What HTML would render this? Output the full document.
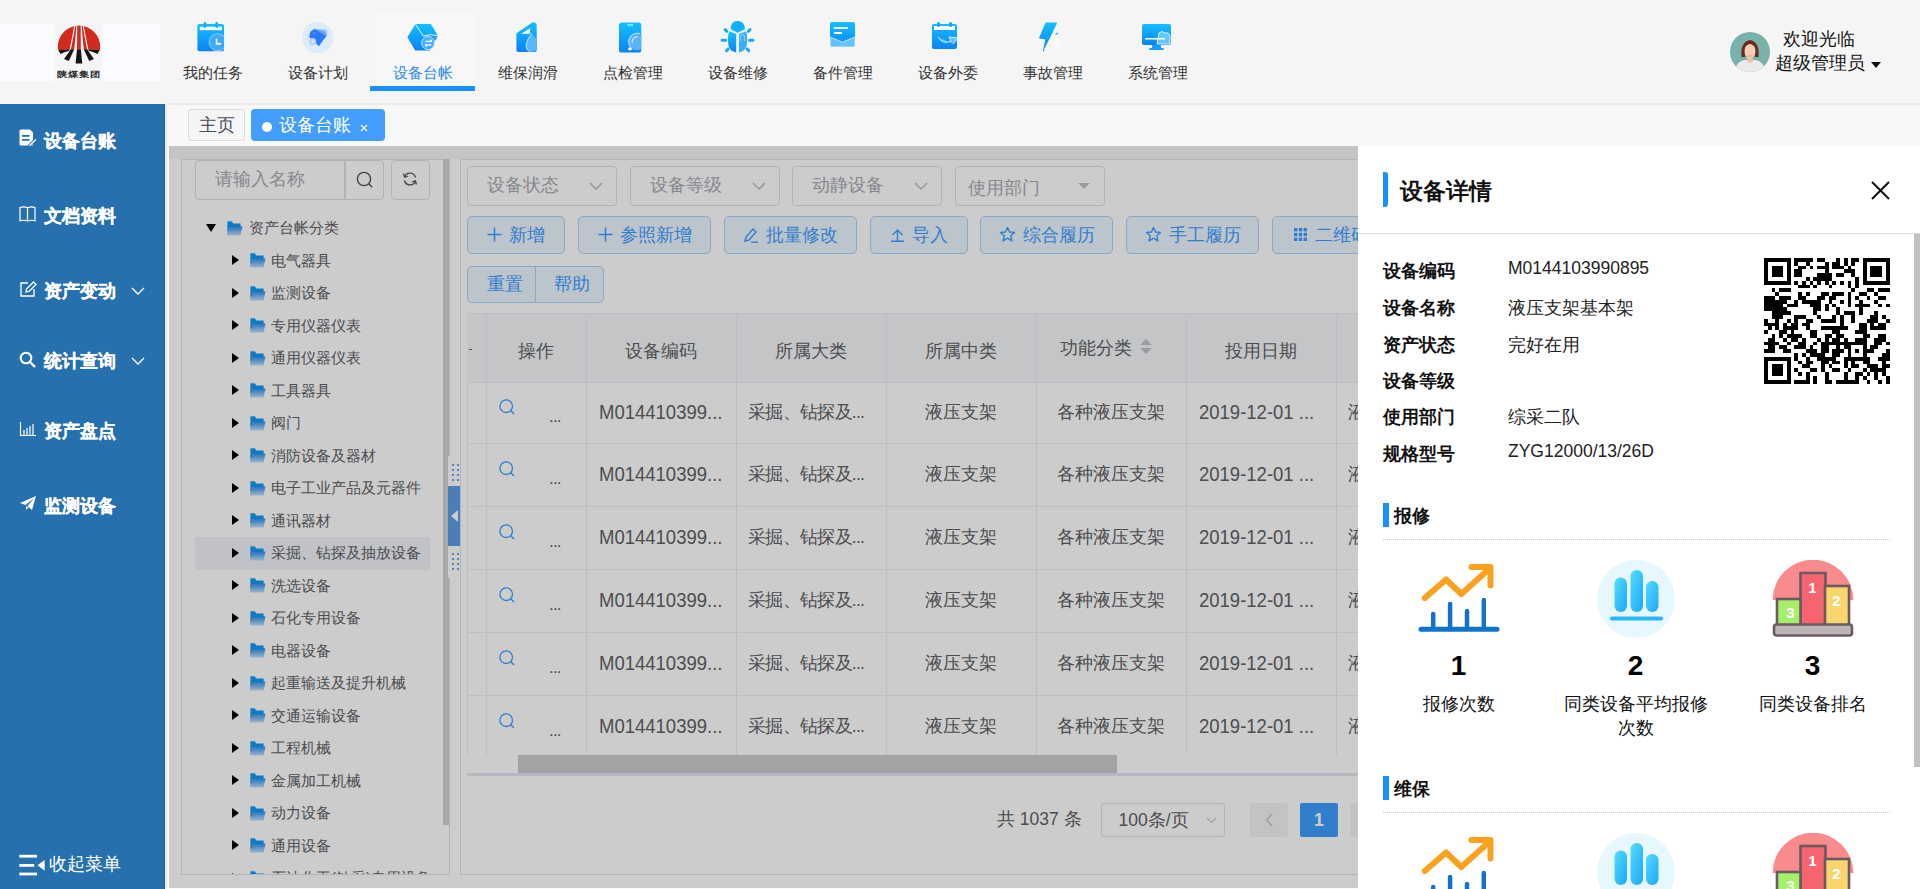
<!DOCTYPE html><html><head><meta charset="utf-8"><title>设备台账</title><style>
*{margin:0;padding:0;box-sizing:border-box}
html,body{width:1920px;height:889px;overflow:hidden;background:#f5f5f5;font-family:"Liberation Sans", sans-serif;position:relative}
.a{position:absolute}
.t{position:absolute;white-space:nowrap}
</style></head><body>
<div class="a" style="left:0;top:0;width:1920px;height:104px;background:#f5f5f5"></div>
<div class="a" style="left:0;top:24px;width:160px;height:57px;background:#fafbfe"></div>
<div class="a" style="left:55px;top:24px;width:47px;height:57px;background:#f5f5f5"></div>
<svg class="a" style="left:56px;top:24px" width="46" height="54" viewBox="0 0 46 54">
<defs><clipPath id="lc"><circle cx="23" cy="22.8" r="21.2"/></clipPath></defs>
<g clip-path="url(#lc)"><path d="M0 0 H46 V26.5 L32 25.2 L14 25.2 L0 26.5 Z" fill="#d12a1e"/></g>
<path d="M18.6 0 L19.6 0 Q17.2 14 14.9 25.6 L13.6 25.6 Q16 14 18.6 0 Z" fill="#f5f5f5"/>
<path d="M20.4 0 L21.3 0 L21 25.6 L18.2 25.6 Q19.6 14 20.4 0 Z" fill="#f5f5f5"/>
<path d="M24.7 0 L25.6 0 Q26.4 14 27.8 25.6 L24.8 25.6 Z" fill="#f5f5f5"/>
<path d="M26.4 0 L27.4 0 Q30 14 32.4 25.6 L31.1 25.6 Q28.8 14 26.4 0 Z" fill="#f5f5f5"/>
<path d="M2.3 26.2 L13.6 25.2 L13.4 26.8 Q8 28.2 4.6 29.9 Z" fill="#151515"/>
<path d="M43.7 26.2 L32.4 25.2 L32.6 26.8 Q38 28.2 41.4 29.9 Z" fill="#151515"/>
<path d="M14.9 25.2 L18.2 25.2 L12.8 37.1 L8 35 Z" fill="#151515"/>
<path d="M21 25.2 L24.8 25.2 L26.3 39.4 L19.6 39.4 Z" fill="#151515"/>
<path d="M27.8 25.2 L31.1 25.2 L38 35 L33.2 37.1 Z" fill="#151515"/>
</svg>
<div class="t" style="left:57px;top:45px;font-size:10.8px;line-height:12px;font-weight:bold;color:#2a2a2a;transform:scale(1.0,0.78);transform-origin:left top;letter-spacing:0px;top:69px">陕煤集团</div>
<div class="a" style="left:370px;top:13px;width:105px;height:78px;background:#f7f7f7"></div>
<div class="a" style="left:370px;top:86px;width:105px;height:5px;background:#1890ff"></div>
<svg class="a" style="left:197px;top:22px" width="30" height="31" viewBox="0 0 30 31"><defs><linearGradient id="bg0" x1="0" y1="0" x2="0" y2="1"><stop offset="0" stop-color="#14c0ff"/><stop offset="1" stop-color="#0a82f5"/></linearGradient></defs><defs><clipPath id="cc0"><rect x="0.4" y="2" width="26.6" height="27.3" rx="2"/></clipPath></defs><rect x="0.4" y="2" width="26.6" height="27.3" rx="2" fill="url(#bg0)"/><rect x="2.8" y="4.7" width="22.2" height="3.5" fill="#fff"/><rect x="6.6" y="0" width="2.6" height="6" rx="1.3" fill="#12b0ff"/><rect x="18.4" y="0" width="2.6" height="6" rx="1.3" fill="#12b0ff"/><g clip-path="url(#cc0)"><circle cx="20.7" cy="20.3" r="8.6" fill="#3cabff"/></g><circle cx="20.7" cy="20.3" r="8.6" fill="none" stroke="#fff" stroke-width="0.6" opacity="0.8"/><path d="M19.6 16.8 V21.9 H24" fill="none" stroke="#fff" stroke-width="1.6"/></svg>
<div class="t" style="left:160px;top:62px;width:105px;text-align:center;font-size:15px;line-height:22px;color:#333">我的任务</div>
<svg class="a" style="left:302px;top:22px" width="32" height="32" viewBox="0 0 32 32"><defs><linearGradient id="bg1" x1="0" y1="0" x2="0" y2="1"><stop offset="0" stop-color="#14c0ff"/><stop offset="1" stop-color="#0a82f5"/></linearGradient></defs><circle cx="15.7" cy="15.5" r="15.6" fill="#dcebfd"/><path d="M12.2 6.7 L25.1 7.5 L25.1 14.1 L20 19 Z" fill="#a9c8f8"/><path d="M12.2 6.9 L23 9 L24.6 14 L20 18 Z" fill="#6f9ff5"/><path d="M8.3 9.8 L12.2 7.1 L24.3 14.1 L20.8 18.8 L16.9 24.25 L7.1 14.9 Z" fill="#2a7af5"/><circle cx="10.7" cy="19.6" r="3.6" fill="#b7d1fb"/><circle cx="10.7" cy="19.6" r="1.3" fill="#dcebfd"/><circle cx="12" cy="11.2" r="0.7" fill="#9cc0fa"/></svg>
<div class="t" style="left:265px;top:62px;width:105px;text-align:center;font-size:15px;line-height:22px;color:#333">设备计划</div>
<svg class="a" style="left:407px;top:22px" width="32" height="30" viewBox="0 0 32 30"><defs><linearGradient id="bg2" x1="0" y1="0" x2="0" y2="1"><stop offset="0" stop-color="#14c0ff"/><stop offset="1" stop-color="#0a82f5"/></linearGradient></defs><path d="M0.4 15.3 L8.2 2.4 Q8.8 2 9.8 2 L23.9 2 L30.9 13.7 L22.7 28.5 L8.2 28.5 Z" fill="url(#bg2)"/><path d="M8.6 2.4 L16.4 14.1 Q23 11.5 30.9 13.7" fill="none" stroke="#fff" stroke-width="0.9"/><circle cx="21.1" cy="21.1" r="6.6" fill="#47b2ff" stroke="#fff" stroke-width="0.7" opacity="0.95"/><path d="M18.6 19.4 H25 M23.3 17.7 L25 19.4 M24.4 22.8 H18 M19.7 24.5 L18 22.8" fill="none" stroke="#fff" stroke-width="1.2"/></svg>
<div class="t" style="left:370px;top:62px;width:105px;text-align:center;font-size:15px;line-height:22px;color:#2f8bf0">设备台帐</div>
<svg class="a" style="left:515px;top:21px" width="23" height="33" viewBox="0 0 23 33"><defs><linearGradient id="bg3" x1="0" y1="0" x2="0" y2="1"><stop offset="0" stop-color="#14c0ff"/><stop offset="1" stop-color="#0a82f5"/></linearGradient></defs><path d="M1.4 13.5 Q1.4 12 2.8 11.2 L17.3 1.6 Q18.6 0.9 20 1.8 L21 2.6 Q21.7 3.2 21.7 4.6 V29.2 Q21.7 31 20 31 H3.2 Q1.4 31 1.4 29.2 Z" fill="url(#bg3)"/><path d="M6.1 12.75 L15.1 7.3 L15.1 12.75 Z" fill="#fff"/><path d="M17 12.4 Q11 19 11 25 A6 6 0 0 0 21.7 28.6 V19 Q19.5 15 17 12.4 Z" fill="#58b8ff"/><path d="M17 12.4 Q11 19 11 25 A6 6 0 0 0 15 30.6" fill="none" stroke="#fff" stroke-width="0.7"/></svg>
<div class="t" style="left:475px;top:62px;width:105px;text-align:center;font-size:15px;line-height:22px;color:#333">维保润滑</div>
<svg class="a" style="left:618px;top:22px" width="25" height="32" viewBox="0 0 25 32"><defs><linearGradient id="bg4" x1="0" y1="0" x2="0" y2="1"><stop offset="0" stop-color="#14c0ff"/><stop offset="1" stop-color="#0a82f5"/></linearGradient></defs><defs><clipPath id="cc4"><rect x="1" y="0.4" width="22.25" height="30.1" rx="2.6"/></clipPath></defs><rect x="1" y="0.4" width="22.25" height="30.1" rx="2.6" fill="url(#bg4)"/><rect x="9.2" y="2.4" width="5.8" height="1.1" fill="#fff" opacity="0.85"/><g clip-path="url(#cc4)"><circle cx="18.6" cy="19.6" r="8.6" fill="#58b6ff"/></g><path d="M12.6 25 A8.6 8.6 0 0 1 22 11.6" fill="none" stroke="#fff" stroke-width="0.7" opacity="0.9"/><path d="M14.2 20.5 A5 5 0 0 1 19.5 14.8" fill="none" stroke="#fff" stroke-width="1"/><ellipse cx="12" cy="26.8" rx="2" ry="1.6" fill="#fff"/></svg>
<div class="t" style="left:580px;top:62px;width:105px;text-align:center;font-size:15px;line-height:22px;color:#333">点检管理</div>
<svg class="a" style="left:720px;top:20px" width="35" height="34" viewBox="0 0 35 34"><defs><linearGradient id="bg5" x1="0" y1="0" x2="0" y2="1"><stop offset="0" stop-color="#14c0ff"/><stop offset="1" stop-color="#0a82f5"/></linearGradient></defs><path d="M10.7 9.2 Q10.7 0.9 17.7 0.9 Q24.8 0.9 24.8 9.2 L17.7 12.8 Z" fill="#0cb2ff"/><path d="M16.2 14 L16.2 32.5 Q8 31.5 8 21 Q8 13.5 9.4 11.3 Z" fill="url(#bg5)"/><path d="M19 14 L26 11.3 Q27.2 13.5 27.2 21 Q27.2 31.5 19 32.5 Z" fill="#3aaeff"/><path d="M20.5 21 V16.5 A2 2 0 0 1 24.5 16.5 V21" fill="none" stroke="#fff" stroke-width="0.6" opacity="0.7"/><path d="M5.2 9.6 L6.8 11.2 M30 9.6 L28.4 11.2 M2.2 20.3 H5.6 M29.6 20.3 H33 M6.5 30.8 L8 29 M28.7 30.8 L27.2 29" stroke="#12aaff" stroke-width="3" stroke-linecap="round"/></svg>
<div class="t" style="left:685px;top:62px;width:105px;text-align:center;font-size:15px;line-height:22px;color:#333">设备维修</div>
<svg class="a" style="left:829px;top:21px" width="27" height="28" viewBox="0 0 27 28"><defs><linearGradient id="bg6" x1="0" y1="0" x2="0" y2="1"><stop offset="0" stop-color="#14c0ff"/><stop offset="1" stop-color="#0a82f5"/></linearGradient></defs><rect x="1" y="1" width="25" height="25" rx="2" fill="url(#bg6)"/><rect x="5" y="6" width="14" height="2" fill="#fff"/><rect x="5" y="11" width="8" height="2" fill="#fff"/><path d="M1 16 L13.5 21 L26 16 L26 24 Q26 26 24 26 L3 26 Q1 26 1 24 Z" fill="#62c3ff" stroke="#fff" stroke-width="0.6"/></svg>
<div class="t" style="left:790px;top:62px;width:105px;text-align:center;font-size:15px;line-height:22px;color:#333">备件管理</div>
<svg class="a" style="left:931px;top:21px" width="28" height="30" viewBox="0 0 28 30"><defs><linearGradient id="bg7" x1="0" y1="0" x2="0" y2="1"><stop offset="0" stop-color="#14c0ff"/><stop offset="1" stop-color="#0a82f5"/></linearGradient></defs><rect x="1" y="3" width="25" height="25" rx="2" fill="url(#bg7)"/><rect x="3" y="5" width="21" height="4" fill="#fff"/><rect x="6" y="1" width="3" height="5" rx="1.5" fill="#0fa8ff"/><rect x="18" y="1" width="3" height="5" rx="1.5" fill="#0fa8ff"/><path d="M7 16 Q12 24 20 20 L18 16 L27 17 L22 23" fill="#5bbfff" stroke="#fff" stroke-width="0.8"/></svg>
<div class="t" style="left:895px;top:62px;width:105px;text-align:center;font-size:15px;line-height:22px;color:#333">设备外委</div>
<svg class="a" style="left:1038px;top:22px" width="27" height="32" viewBox="0 0 27 32"><defs><linearGradient id="bg8" x1="0" y1="0" x2="0" y2="1"><stop offset="0" stop-color="#14c0ff"/><stop offset="1" stop-color="#0a82f5"/></linearGradient></defs><path d="M7.4 0.9 Q7.7 0.4 8.3 0.4 L18.3 0.6 Q19.2 0.7 18.9 1.5 L5.4 29.4 Q5 30 4.9 29.2 L7.3 17.4 L1.6 16.6 Q0.8 16.5 1.1 15.8 Z" fill="url(#bg8)"/><path d="M11 27 L18 13 L27 26 Z" fill="#fff" opacity="0.45"/><path d="M6.5 27 L14.5 12.5 Q16 10.5 17 12.5 L17.5 14" fill="none" stroke="#fff" stroke-width="0.7" opacity="0.9"/><path d="M17.5 12.5 L20 11" stroke="#12a0ff" stroke-width="1.4"/></svg>
<div class="t" style="left:1000px;top:62px;width:105px;text-align:center;font-size:15px;line-height:22px;color:#333">事故管理</div>
<svg class="a" style="left:1141px;top:23px" width="31" height="28" viewBox="0 0 31 28"><defs><linearGradient id="bg9" x1="0" y1="0" x2="0" y2="1"><stop offset="0" stop-color="#14c0ff"/><stop offset="1" stop-color="#0a82f5"/></linearGradient></defs><rect x="1" y="1" width="29" height="21" rx="2" fill="url(#bg9)"/><rect x="11" y="22" width="9" height="4" fill="#16a0ff"/><rect x="8" y="25" width="15" height="2" rx="1" fill="#16a0ff"/><path d="M18 10 Q21 7 24 10 Q28 9 29 13 L29 21 L16 21 Z" fill="#64c6ff" stroke="#fff" stroke-width="0.8"/><rect x="4" y="15" width="20" height="1.5" fill="#fff"/></svg>
<div class="t" style="left:1105px;top:62px;width:105px;text-align:center;font-size:15px;line-height:22px;color:#333">系统管理</div>
<svg class="a" style="left:1730px;top:32px" width="40" height="40" viewBox="0 0 40 40">
<defs><clipPath id="av"><circle cx="20" cy="20" r="20"/></clipPath></defs>
<g clip-path="url(#av)">
<rect width="40" height="40" fill="#79b2ab"/>
<path d="M4 40 Q6 30 14 28 L26 28 Q34 30 36 40 Z" fill="#ecebea"/>
<path d="M17 24 L23 24 L23 29 L20 31 L17 29 Z" fill="#e8c2a8"/>
<path d="M11.5 25 Q10 10 20 8 Q30 10 28.5 25 L25 25 L25 15 L15 15 L15 25 Z" fill="#6e2a1f"/>
<ellipse cx="20" cy="19" rx="5.5" ry="7" fill="#f1cdb3"/>
<path d="M14 15 Q20 8 26 15 L26 12 Q20 6 14 12 Z" fill="#6e2a1f"/>
<rect x="18.7" y="23.5" width="2.6" height="0.9" fill="#d77b7b"/>
</g></svg>
<div class="t" style="left:1775px;top:28px;width:88px;text-align:center;font-size:17.5px;line-height:22px;color:#111">欢迎光临</div>
<div class="t" style="left:1775px;top:52px;font-size:17.5px;line-height:22px;color:#111">超级管理员</div>
<div class="a" style="left:1871px;top:62px;width:0;height:0;border-left:5.5px solid transparent;border-right:5.5px solid transparent;border-top:6.5px solid #111"></div>
<div class="a" style="left:0;top:104px;width:165px;height:785px;background:#2670ae;border-right:1px solid #1d62a6"></div>
<svg class="a" style="left:19px;top:129.2px" width="18" height="18" viewBox="0 0 18 18"><path d="M0.5 2 Q0.5 0.5 2 0.5 H11 L14 3.5 V16.5 H2 Q0.5 16.5 0.5 15 Z" fill="#fff"/><rect x="3" y="6" width="7.5" height="1.8" fill="#2670ae"/><rect x="3" y="10" width="7.5" height="1.8" fill="#2670ae"/><path d="M10 17 L17 10" stroke="#2670ae" stroke-width="3"/><path d="M10.5 16.8 L16.8 10.5" stroke="#fff" stroke-width="1.4"/></svg>
<div class="t" style="left:43.5px;top:129.7px;font-size:17.5px;line-height:22px;font-weight:bold;color:#fff;-webkit-text-stroke:0.25px #fff">设备台账</div>
<svg class="a" style="left:19px;top:204.8px" width="18" height="18" viewBox="0 0 18 18"><path d="M1 2.5 Q5 1.2 8.5 2.8 V16 Q5 14.6 1 15.8 Z M8.5 2.8 Q12 1.2 16 2.5 V15.8 Q12 14.6 8.5 16" fill="none" stroke="#fff" stroke-width="1.2"/></svg>
<div class="t" style="left:43.5px;top:205.3px;font-size:17.5px;line-height:22px;font-weight:bold;color:#fff;-webkit-text-stroke:0.25px #fff">文档资料</div>
<svg class="a" style="left:19px;top:279.5px" width="18" height="18" viewBox="0 0 18 18"><path d="M9 3 H2 V16 H15 V9" fill="none" stroke="#fff" stroke-width="1.3"/><path d="M7 12 L7.5 9 L14.5 2 L17 4.5 L10 11.5 Z" fill="none" stroke="#fff" stroke-width="1.3"/></svg>
<div class="t" style="left:43.5px;top:280.0px;font-size:17.5px;line-height:22px;font-weight:bold;color:#fff;-webkit-text-stroke:0.25px #fff">资产变动</div>
<svg class="a" style="left:131px;top:287.0px" width="14" height="8" viewBox="0 0 14 8"><path d="M1 1 L7 7 L13 1" fill="none" stroke="#fff" stroke-width="1.3"/></svg>
<svg class="a" style="left:19px;top:351.2px" width="18" height="18" viewBox="0 0 18 18"><circle cx="7" cy="7" r="5.3" fill="none" stroke="#fff" stroke-width="2.1"/><path d="M11 11 L16 16" stroke="#fff" stroke-width="2.4"/></svg>
<div class="t" style="left:43.5px;top:350.0px;font-size:17.5px;line-height:22px;font-weight:bold;color:#fff;-webkit-text-stroke:0.25px #fff">统计查询</div>
<svg class="a" style="left:131px;top:357.0px" width="14" height="8" viewBox="0 0 14 8"><path d="M1 1 L7 7 L13 1" fill="none" stroke="#fff" stroke-width="1.3"/></svg>
<svg class="a" style="left:19px;top:419.5px" width="18" height="18" viewBox="0 0 18 18"><path d="M1.5 2 V15.5 H17" fill="none" stroke="#fff" stroke-width="1.2"/><path d="M5 15 V10 M8 15 V8 M11 15 V6 M14 15 V4" stroke="#fff" stroke-width="1.2"/></svg>
<div class="t" style="left:43.5px;top:419.5px;font-size:17.5px;line-height:22px;font-weight:bold;color:#fff;-webkit-text-stroke:0.25px #fff">资产盘点</div>
<svg class="a" style="left:19px;top:493.5px" width="18" height="18" viewBox="0 0 18 18"><path d="M1 9 L17 2 L13 16 L8.5 12 L15 4 L6.5 11 Z" fill="#fff"/><path d="M7 12 L7 16 L9.5 13.5" fill="#fff"/></svg>
<div class="t" style="left:43.5px;top:495.0px;font-size:17.5px;line-height:22px;font-weight:bold;color:#fff;-webkit-text-stroke:0.25px #fff">监测设备</div>
<svg class="a" style="left:19px;top:854px" width="27" height="22" viewBox="0 0 27 22"><rect x="0.3" y="0.8" width="17.7" height="2.8" fill="#fff"/><rect x="0.3" y="10" width="15" height="2.8" fill="#fff"/><rect x="0.3" y="18.6" width="17.7" height="2.8" fill="#fff"/><path d="M18.5 11.3 L25.7 6 L25.7 16.7 Z" fill="#fff"/></svg>
<div class="t" style="left:49px;top:853px;font-size:17.5px;line-height:22px;color:#fff">收起菜单</div>
<div class="a" style="left:165px;top:104px;width:1755px;height:42px;background:#f8f8f8"></div>
<div class="a" style="left:165px;top:103px;width:1755px;height:1.5px;background:#ebebeb"></div>
<div class="a" style="left:165px;top:104px;width:4px;height:785px;background:linear-gradient(90deg,#e9e9e9,#fafafa)"></div>
<div class="a" style="left:188px;top:109px;width:57px;height:32px;border:1px solid #d8dce5;border-radius:3px;background:#f5f5f5"></div>
<div class="t" style="left:188px;top:114px;width:57px;text-align:center;font-size:17.5px;line-height:22px;color:#495060">主页</div>
<div class="a" style="left:251px;top:109px;width:134px;height:32px;border-radius:4px;background:#429dfd"></div>
<div class="a" style="left:262px;top:122px;width:10px;height:10px;border-radius:50%;background:#fff"></div>
<div class="t" style="left:279px;top:114px;font-size:17.5px;line-height:22px;color:#fff">设备台账</div>
<svg class="a" style="left:360px;top:124px" width="8" height="8" viewBox="0 0 8 8"><path d="M1 1L7 7M7 1L1 7" stroke="#fff" stroke-width="1.2"/></svg>
<div class="a" style="left:169px;top:146px;width:1751px;height:741.5px;background:#fff;overflow:hidden">
<div class="a" style="left:0;top:0;width:1751px;height:12.5px;background:#f7f7f7"></div>
<div class="a" style="left:12px;top:12.5px;width:269px;height:716px;background:#fff;border:1px solid #dce3ed"></div>
<div class="a" style="left:26px;top:14px;width:150px;height:39.5px;border:1px solid #dcdfe6;border-radius:4px 0 0 4px;background:#fff"></div>
<div class="t" style="left:46px;top:22px;font-size:17.5px;line-height:22px;color:#a8abb2">请输入名称</div>
<div class="a" style="left:175.5px;top:14px;width:39.5px;height:39.5px;border:1px solid #dcdfe6;border-radius:0 4px 4px 0;background:#fff"></div>
<svg class="a" style="left:186.5px;top:25px" width="18" height="18" viewBox="0 0 18 18"><circle cx="8" cy="8" r="6.6" fill="none" stroke="#555" stroke-width="1.4"/><path d="M12.8 12.8 L16.2 16.2" stroke="#555" stroke-width="1.5"/></svg>
<div class="a" style="left:222px;top:14px;width:39px;height:39.5px;border:1px solid #dcdfe6;border-radius:4px;background:#fff"></div>
<svg class="a" style="left:233px;top:25px" width="16" height="16" viewBox="0 0 16 16"><path d="M13.5 6.5 A5.8 5.8 0 0 0 2.6 5.5" fill="none" stroke="#555" stroke-width="1.4"/><path d="M2.5 9.5 A5.8 5.8 0 0 0 13.4 10.5" fill="none" stroke="#555" stroke-width="1.4"/><path d="M1.5 2.5 L2.6 6.2 L6 5" fill="none" stroke="#555" stroke-width="1.3"/><path d="M14.5 13.5 L13.4 9.8 L10 11" fill="none" stroke="#555" stroke-width="1.3"/></svg>
<div class="a" style="left:274px;top:13px;width:6px;height:666px;background:#d2d2d2"></div>
<div class="a" style="left:13px;top:13.5px;width:260px;height:714px;overflow:hidden">
<div class="a" style="left:13px;top:377.5px;width:235px;height:33px;background:#f0f3f9"></div>
<div class="a" style="left:24px;top:64.5px;width:0;height:0;border-left:5.5px solid transparent;border-right:5.5px solid transparent;border-top:8px solid #000"></div>
<svg class="a" style="left:44.5px;top:61.0px" width="16" height="15" viewBox="0 0 16 15"><defs><linearGradient id="fg" x1="0" y1="0" x2="0" y2="1"><stop offset="0" stop-color="#2c90f0"/><stop offset="1" stop-color="#c2e0f8"/></linearGradient><linearGradient id="fb" x1="0" y1="0" x2="0" y2="1"><stop offset="0" stop-color="#08a2ff"/><stop offset="0.6" stop-color="#1a8fe8"/><stop offset="1" stop-color="#9ccdf3"/></linearGradient></defs><path d="M0.4 0.6 Q0.4 0.3 0.8 0.3 H4.8 L6.3 2.4 H13.6 V6 H2.6 L0.9 14.4 H0.4 Z" fill="url(#fb)"/><path d="M2.6 5.6 H15.5 L13.5 14.4 H0.8 Z" fill="url(#fg)"/></svg>
<div class="t" style="left:67px;top:57.5px;font-size:15px;line-height:22px;color:#606266">资产台帐分类</div>
<div class="a" style="left:50px;top:95.5px;width:0;height:0;border-top:5.5px solid transparent;border-bottom:5.5px solid transparent;border-left:7px solid #000"></div>
<svg class="a" style="left:67.5px;top:93.5px" width="16" height="15" viewBox="0 0 16 15"><defs><linearGradient id="fg" x1="0" y1="0" x2="0" y2="1"><stop offset="0" stop-color="#2c90f0"/><stop offset="1" stop-color="#c2e0f8"/></linearGradient><linearGradient id="fb" x1="0" y1="0" x2="0" y2="1"><stop offset="0" stop-color="#08a2ff"/><stop offset="0.6" stop-color="#1a8fe8"/><stop offset="1" stop-color="#9ccdf3"/></linearGradient></defs><path d="M0.4 0.6 Q0.4 0.3 0.8 0.3 H4.8 L6.3 2.4 H13.6 V6 H2.6 L0.9 14.4 H0.4 Z" fill="url(#fb)"/><path d="M2.6 5.6 H15.5 L13.5 14.4 H0.8 Z" fill="url(#fg)"/></svg>
<div class="t" style="left:89px;top:90.0px;font-size:15px;line-height:22px;color:#606266">电气器具</div>
<div class="a" style="left:50px;top:128.0px;width:0;height:0;border-top:5.5px solid transparent;border-bottom:5.5px solid transparent;border-left:7px solid #000"></div>
<svg class="a" style="left:67.5px;top:126.0px" width="16" height="15" viewBox="0 0 16 15"><defs><linearGradient id="fg" x1="0" y1="0" x2="0" y2="1"><stop offset="0" stop-color="#2c90f0"/><stop offset="1" stop-color="#c2e0f8"/></linearGradient><linearGradient id="fb" x1="0" y1="0" x2="0" y2="1"><stop offset="0" stop-color="#08a2ff"/><stop offset="0.6" stop-color="#1a8fe8"/><stop offset="1" stop-color="#9ccdf3"/></linearGradient></defs><path d="M0.4 0.6 Q0.4 0.3 0.8 0.3 H4.8 L6.3 2.4 H13.6 V6 H2.6 L0.9 14.4 H0.4 Z" fill="url(#fb)"/><path d="M2.6 5.6 H15.5 L13.5 14.4 H0.8 Z" fill="url(#fg)"/></svg>
<div class="t" style="left:89px;top:122.5px;font-size:15px;line-height:22px;color:#606266">监测设备</div>
<div class="a" style="left:50px;top:160.5px;width:0;height:0;border-top:5.5px solid transparent;border-bottom:5.5px solid transparent;border-left:7px solid #000"></div>
<svg class="a" style="left:67.5px;top:158.5px" width="16" height="15" viewBox="0 0 16 15"><defs><linearGradient id="fg" x1="0" y1="0" x2="0" y2="1"><stop offset="0" stop-color="#2c90f0"/><stop offset="1" stop-color="#c2e0f8"/></linearGradient><linearGradient id="fb" x1="0" y1="0" x2="0" y2="1"><stop offset="0" stop-color="#08a2ff"/><stop offset="0.6" stop-color="#1a8fe8"/><stop offset="1" stop-color="#9ccdf3"/></linearGradient></defs><path d="M0.4 0.6 Q0.4 0.3 0.8 0.3 H4.8 L6.3 2.4 H13.6 V6 H2.6 L0.9 14.4 H0.4 Z" fill="url(#fb)"/><path d="M2.6 5.6 H15.5 L13.5 14.4 H0.8 Z" fill="url(#fg)"/></svg>
<div class="t" style="left:89px;top:155.0px;font-size:15px;line-height:22px;color:#606266">专用仪器仪表</div>
<div class="a" style="left:50px;top:193.0px;width:0;height:0;border-top:5.5px solid transparent;border-bottom:5.5px solid transparent;border-left:7px solid #000"></div>
<svg class="a" style="left:67.5px;top:191.0px" width="16" height="15" viewBox="0 0 16 15"><defs><linearGradient id="fg" x1="0" y1="0" x2="0" y2="1"><stop offset="0" stop-color="#2c90f0"/><stop offset="1" stop-color="#c2e0f8"/></linearGradient><linearGradient id="fb" x1="0" y1="0" x2="0" y2="1"><stop offset="0" stop-color="#08a2ff"/><stop offset="0.6" stop-color="#1a8fe8"/><stop offset="1" stop-color="#9ccdf3"/></linearGradient></defs><path d="M0.4 0.6 Q0.4 0.3 0.8 0.3 H4.8 L6.3 2.4 H13.6 V6 H2.6 L0.9 14.4 H0.4 Z" fill="url(#fb)"/><path d="M2.6 5.6 H15.5 L13.5 14.4 H0.8 Z" fill="url(#fg)"/></svg>
<div class="t" style="left:89px;top:187.5px;font-size:15px;line-height:22px;color:#606266">通用仪器仪表</div>
<div class="a" style="left:50px;top:225.5px;width:0;height:0;border-top:5.5px solid transparent;border-bottom:5.5px solid transparent;border-left:7px solid #000"></div>
<svg class="a" style="left:67.5px;top:223.5px" width="16" height="15" viewBox="0 0 16 15"><defs><linearGradient id="fg" x1="0" y1="0" x2="0" y2="1"><stop offset="0" stop-color="#2c90f0"/><stop offset="1" stop-color="#c2e0f8"/></linearGradient><linearGradient id="fb" x1="0" y1="0" x2="0" y2="1"><stop offset="0" stop-color="#08a2ff"/><stop offset="0.6" stop-color="#1a8fe8"/><stop offset="1" stop-color="#9ccdf3"/></linearGradient></defs><path d="M0.4 0.6 Q0.4 0.3 0.8 0.3 H4.8 L6.3 2.4 H13.6 V6 H2.6 L0.9 14.4 H0.4 Z" fill="url(#fb)"/><path d="M2.6 5.6 H15.5 L13.5 14.4 H0.8 Z" fill="url(#fg)"/></svg>
<div class="t" style="left:89px;top:220.0px;font-size:15px;line-height:22px;color:#606266">工具器具</div>
<div class="a" style="left:50px;top:258.0px;width:0;height:0;border-top:5.5px solid transparent;border-bottom:5.5px solid transparent;border-left:7px solid #000"></div>
<svg class="a" style="left:67.5px;top:256.0px" width="16" height="15" viewBox="0 0 16 15"><defs><linearGradient id="fg" x1="0" y1="0" x2="0" y2="1"><stop offset="0" stop-color="#2c90f0"/><stop offset="1" stop-color="#c2e0f8"/></linearGradient><linearGradient id="fb" x1="0" y1="0" x2="0" y2="1"><stop offset="0" stop-color="#08a2ff"/><stop offset="0.6" stop-color="#1a8fe8"/><stop offset="1" stop-color="#9ccdf3"/></linearGradient></defs><path d="M0.4 0.6 Q0.4 0.3 0.8 0.3 H4.8 L6.3 2.4 H13.6 V6 H2.6 L0.9 14.4 H0.4 Z" fill="url(#fb)"/><path d="M2.6 5.6 H15.5 L13.5 14.4 H0.8 Z" fill="url(#fg)"/></svg>
<div class="t" style="left:89px;top:252.5px;font-size:15px;line-height:22px;color:#606266">阀门</div>
<div class="a" style="left:50px;top:290.5px;width:0;height:0;border-top:5.5px solid transparent;border-bottom:5.5px solid transparent;border-left:7px solid #000"></div>
<svg class="a" style="left:67.5px;top:288.5px" width="16" height="15" viewBox="0 0 16 15"><defs><linearGradient id="fg" x1="0" y1="0" x2="0" y2="1"><stop offset="0" stop-color="#2c90f0"/><stop offset="1" stop-color="#c2e0f8"/></linearGradient><linearGradient id="fb" x1="0" y1="0" x2="0" y2="1"><stop offset="0" stop-color="#08a2ff"/><stop offset="0.6" stop-color="#1a8fe8"/><stop offset="1" stop-color="#9ccdf3"/></linearGradient></defs><path d="M0.4 0.6 Q0.4 0.3 0.8 0.3 H4.8 L6.3 2.4 H13.6 V6 H2.6 L0.9 14.4 H0.4 Z" fill="url(#fb)"/><path d="M2.6 5.6 H15.5 L13.5 14.4 H0.8 Z" fill="url(#fg)"/></svg>
<div class="t" style="left:89px;top:285.0px;font-size:15px;line-height:22px;color:#606266">消防设备及器材</div>
<div class="a" style="left:50px;top:323.0px;width:0;height:0;border-top:5.5px solid transparent;border-bottom:5.5px solid transparent;border-left:7px solid #000"></div>
<svg class="a" style="left:67.5px;top:321.0px" width="16" height="15" viewBox="0 0 16 15"><defs><linearGradient id="fg" x1="0" y1="0" x2="0" y2="1"><stop offset="0" stop-color="#2c90f0"/><stop offset="1" stop-color="#c2e0f8"/></linearGradient><linearGradient id="fb" x1="0" y1="0" x2="0" y2="1"><stop offset="0" stop-color="#08a2ff"/><stop offset="0.6" stop-color="#1a8fe8"/><stop offset="1" stop-color="#9ccdf3"/></linearGradient></defs><path d="M0.4 0.6 Q0.4 0.3 0.8 0.3 H4.8 L6.3 2.4 H13.6 V6 H2.6 L0.9 14.4 H0.4 Z" fill="url(#fb)"/><path d="M2.6 5.6 H15.5 L13.5 14.4 H0.8 Z" fill="url(#fg)"/></svg>
<div class="t" style="left:89px;top:317.5px;font-size:15px;line-height:22px;color:#606266">电子工业产品及元器件</div>
<div class="a" style="left:50px;top:355.5px;width:0;height:0;border-top:5.5px solid transparent;border-bottom:5.5px solid transparent;border-left:7px solid #000"></div>
<svg class="a" style="left:67.5px;top:353.5px" width="16" height="15" viewBox="0 0 16 15"><defs><linearGradient id="fg" x1="0" y1="0" x2="0" y2="1"><stop offset="0" stop-color="#2c90f0"/><stop offset="1" stop-color="#c2e0f8"/></linearGradient><linearGradient id="fb" x1="0" y1="0" x2="0" y2="1"><stop offset="0" stop-color="#08a2ff"/><stop offset="0.6" stop-color="#1a8fe8"/><stop offset="1" stop-color="#9ccdf3"/></linearGradient></defs><path d="M0.4 0.6 Q0.4 0.3 0.8 0.3 H4.8 L6.3 2.4 H13.6 V6 H2.6 L0.9 14.4 H0.4 Z" fill="url(#fb)"/><path d="M2.6 5.6 H15.5 L13.5 14.4 H0.8 Z" fill="url(#fg)"/></svg>
<div class="t" style="left:89px;top:350.0px;font-size:15px;line-height:22px;color:#606266">通讯器材</div>
<div class="a" style="left:50px;top:388.0px;width:0;height:0;border-top:5.5px solid transparent;border-bottom:5.5px solid transparent;border-left:7px solid #000"></div>
<svg class="a" style="left:67.5px;top:386.0px" width="16" height="15" viewBox="0 0 16 15"><defs><linearGradient id="fg" x1="0" y1="0" x2="0" y2="1"><stop offset="0" stop-color="#2c90f0"/><stop offset="1" stop-color="#c2e0f8"/></linearGradient><linearGradient id="fb" x1="0" y1="0" x2="0" y2="1"><stop offset="0" stop-color="#08a2ff"/><stop offset="0.6" stop-color="#1a8fe8"/><stop offset="1" stop-color="#9ccdf3"/></linearGradient></defs><path d="M0.4 0.6 Q0.4 0.3 0.8 0.3 H4.8 L6.3 2.4 H13.6 V6 H2.6 L0.9 14.4 H0.4 Z" fill="url(#fb)"/><path d="M2.6 5.6 H15.5 L13.5 14.4 H0.8 Z" fill="url(#fg)"/></svg>
<div class="t" style="left:89px;top:382.5px;font-size:15px;line-height:22px;color:#606266">采掘、钻探及抽放设备</div>
<div class="a" style="left:50px;top:420.5px;width:0;height:0;border-top:5.5px solid transparent;border-bottom:5.5px solid transparent;border-left:7px solid #000"></div>
<svg class="a" style="left:67.5px;top:418.5px" width="16" height="15" viewBox="0 0 16 15"><defs><linearGradient id="fg" x1="0" y1="0" x2="0" y2="1"><stop offset="0" stop-color="#2c90f0"/><stop offset="1" stop-color="#c2e0f8"/></linearGradient><linearGradient id="fb" x1="0" y1="0" x2="0" y2="1"><stop offset="0" stop-color="#08a2ff"/><stop offset="0.6" stop-color="#1a8fe8"/><stop offset="1" stop-color="#9ccdf3"/></linearGradient></defs><path d="M0.4 0.6 Q0.4 0.3 0.8 0.3 H4.8 L6.3 2.4 H13.6 V6 H2.6 L0.9 14.4 H0.4 Z" fill="url(#fb)"/><path d="M2.6 5.6 H15.5 L13.5 14.4 H0.8 Z" fill="url(#fg)"/></svg>
<div class="t" style="left:89px;top:415.0px;font-size:15px;line-height:22px;color:#606266">洗选设备</div>
<div class="a" style="left:50px;top:453.0px;width:0;height:0;border-top:5.5px solid transparent;border-bottom:5.5px solid transparent;border-left:7px solid #000"></div>
<svg class="a" style="left:67.5px;top:451.0px" width="16" height="15" viewBox="0 0 16 15"><defs><linearGradient id="fg" x1="0" y1="0" x2="0" y2="1"><stop offset="0" stop-color="#2c90f0"/><stop offset="1" stop-color="#c2e0f8"/></linearGradient><linearGradient id="fb" x1="0" y1="0" x2="0" y2="1"><stop offset="0" stop-color="#08a2ff"/><stop offset="0.6" stop-color="#1a8fe8"/><stop offset="1" stop-color="#9ccdf3"/></linearGradient></defs><path d="M0.4 0.6 Q0.4 0.3 0.8 0.3 H4.8 L6.3 2.4 H13.6 V6 H2.6 L0.9 14.4 H0.4 Z" fill="url(#fb)"/><path d="M2.6 5.6 H15.5 L13.5 14.4 H0.8 Z" fill="url(#fg)"/></svg>
<div class="t" style="left:89px;top:447.5px;font-size:15px;line-height:22px;color:#606266">石化专用设备</div>
<div class="a" style="left:50px;top:485.5px;width:0;height:0;border-top:5.5px solid transparent;border-bottom:5.5px solid transparent;border-left:7px solid #000"></div>
<svg class="a" style="left:67.5px;top:483.5px" width="16" height="15" viewBox="0 0 16 15"><defs><linearGradient id="fg" x1="0" y1="0" x2="0" y2="1"><stop offset="0" stop-color="#2c90f0"/><stop offset="1" stop-color="#c2e0f8"/></linearGradient><linearGradient id="fb" x1="0" y1="0" x2="0" y2="1"><stop offset="0" stop-color="#08a2ff"/><stop offset="0.6" stop-color="#1a8fe8"/><stop offset="1" stop-color="#9ccdf3"/></linearGradient></defs><path d="M0.4 0.6 Q0.4 0.3 0.8 0.3 H4.8 L6.3 2.4 H13.6 V6 H2.6 L0.9 14.4 H0.4 Z" fill="url(#fb)"/><path d="M2.6 5.6 H15.5 L13.5 14.4 H0.8 Z" fill="url(#fg)"/></svg>
<div class="t" style="left:89px;top:480.0px;font-size:15px;line-height:22px;color:#606266">电器设备</div>
<div class="a" style="left:50px;top:518.0px;width:0;height:0;border-top:5.5px solid transparent;border-bottom:5.5px solid transparent;border-left:7px solid #000"></div>
<svg class="a" style="left:67.5px;top:516.0px" width="16" height="15" viewBox="0 0 16 15"><defs><linearGradient id="fg" x1="0" y1="0" x2="0" y2="1"><stop offset="0" stop-color="#2c90f0"/><stop offset="1" stop-color="#c2e0f8"/></linearGradient><linearGradient id="fb" x1="0" y1="0" x2="0" y2="1"><stop offset="0" stop-color="#08a2ff"/><stop offset="0.6" stop-color="#1a8fe8"/><stop offset="1" stop-color="#9ccdf3"/></linearGradient></defs><path d="M0.4 0.6 Q0.4 0.3 0.8 0.3 H4.8 L6.3 2.4 H13.6 V6 H2.6 L0.9 14.4 H0.4 Z" fill="url(#fb)"/><path d="M2.6 5.6 H15.5 L13.5 14.4 H0.8 Z" fill="url(#fg)"/></svg>
<div class="t" style="left:89px;top:512.5px;font-size:15px;line-height:22px;color:#606266">起重输送及提升机械</div>
<div class="a" style="left:50px;top:550.5px;width:0;height:0;border-top:5.5px solid transparent;border-bottom:5.5px solid transparent;border-left:7px solid #000"></div>
<svg class="a" style="left:67.5px;top:548.5px" width="16" height="15" viewBox="0 0 16 15"><defs><linearGradient id="fg" x1="0" y1="0" x2="0" y2="1"><stop offset="0" stop-color="#2c90f0"/><stop offset="1" stop-color="#c2e0f8"/></linearGradient><linearGradient id="fb" x1="0" y1="0" x2="0" y2="1"><stop offset="0" stop-color="#08a2ff"/><stop offset="0.6" stop-color="#1a8fe8"/><stop offset="1" stop-color="#9ccdf3"/></linearGradient></defs><path d="M0.4 0.6 Q0.4 0.3 0.8 0.3 H4.8 L6.3 2.4 H13.6 V6 H2.6 L0.9 14.4 H0.4 Z" fill="url(#fb)"/><path d="M2.6 5.6 H15.5 L13.5 14.4 H0.8 Z" fill="url(#fg)"/></svg>
<div class="t" style="left:89px;top:545.0px;font-size:15px;line-height:22px;color:#606266">交通运输设备</div>
<div class="a" style="left:50px;top:583.0px;width:0;height:0;border-top:5.5px solid transparent;border-bottom:5.5px solid transparent;border-left:7px solid #000"></div>
<svg class="a" style="left:67.5px;top:581.0px" width="16" height="15" viewBox="0 0 16 15"><defs><linearGradient id="fg" x1="0" y1="0" x2="0" y2="1"><stop offset="0" stop-color="#2c90f0"/><stop offset="1" stop-color="#c2e0f8"/></linearGradient><linearGradient id="fb" x1="0" y1="0" x2="0" y2="1"><stop offset="0" stop-color="#08a2ff"/><stop offset="0.6" stop-color="#1a8fe8"/><stop offset="1" stop-color="#9ccdf3"/></linearGradient></defs><path d="M0.4 0.6 Q0.4 0.3 0.8 0.3 H4.8 L6.3 2.4 H13.6 V6 H2.6 L0.9 14.4 H0.4 Z" fill="url(#fb)"/><path d="M2.6 5.6 H15.5 L13.5 14.4 H0.8 Z" fill="url(#fg)"/></svg>
<div class="t" style="left:89px;top:577.5px;font-size:15px;line-height:22px;color:#606266">工程机械</div>
<div class="a" style="left:50px;top:615.5px;width:0;height:0;border-top:5.5px solid transparent;border-bottom:5.5px solid transparent;border-left:7px solid #000"></div>
<svg class="a" style="left:67.5px;top:613.5px" width="16" height="15" viewBox="0 0 16 15"><defs><linearGradient id="fg" x1="0" y1="0" x2="0" y2="1"><stop offset="0" stop-color="#2c90f0"/><stop offset="1" stop-color="#c2e0f8"/></linearGradient><linearGradient id="fb" x1="0" y1="0" x2="0" y2="1"><stop offset="0" stop-color="#08a2ff"/><stop offset="0.6" stop-color="#1a8fe8"/><stop offset="1" stop-color="#9ccdf3"/></linearGradient></defs><path d="M0.4 0.6 Q0.4 0.3 0.8 0.3 H4.8 L6.3 2.4 H13.6 V6 H2.6 L0.9 14.4 H0.4 Z" fill="url(#fb)"/><path d="M2.6 5.6 H15.5 L13.5 14.4 H0.8 Z" fill="url(#fg)"/></svg>
<div class="t" style="left:89px;top:610.0px;font-size:15px;line-height:22px;color:#606266">金属加工机械</div>
<div class="a" style="left:50px;top:648.0px;width:0;height:0;border-top:5.5px solid transparent;border-bottom:5.5px solid transparent;border-left:7px solid #000"></div>
<svg class="a" style="left:67.5px;top:646.0px" width="16" height="15" viewBox="0 0 16 15"><defs><linearGradient id="fg" x1="0" y1="0" x2="0" y2="1"><stop offset="0" stop-color="#2c90f0"/><stop offset="1" stop-color="#c2e0f8"/></linearGradient><linearGradient id="fb" x1="0" y1="0" x2="0" y2="1"><stop offset="0" stop-color="#08a2ff"/><stop offset="0.6" stop-color="#1a8fe8"/><stop offset="1" stop-color="#9ccdf3"/></linearGradient></defs><path d="M0.4 0.6 Q0.4 0.3 0.8 0.3 H4.8 L6.3 2.4 H13.6 V6 H2.6 L0.9 14.4 H0.4 Z" fill="url(#fb)"/><path d="M2.6 5.6 H15.5 L13.5 14.4 H0.8 Z" fill="url(#fg)"/></svg>
<div class="t" style="left:89px;top:642.5px;font-size:15px;line-height:22px;color:#606266">动力设备</div>
<div class="a" style="left:50px;top:680.5px;width:0;height:0;border-top:5.5px solid transparent;border-bottom:5.5px solid transparent;border-left:7px solid #000"></div>
<svg class="a" style="left:67.5px;top:678.5px" width="16" height="15" viewBox="0 0 16 15"><defs><linearGradient id="fg" x1="0" y1="0" x2="0" y2="1"><stop offset="0" stop-color="#2c90f0"/><stop offset="1" stop-color="#c2e0f8"/></linearGradient><linearGradient id="fb" x1="0" y1="0" x2="0" y2="1"><stop offset="0" stop-color="#08a2ff"/><stop offset="0.6" stop-color="#1a8fe8"/><stop offset="1" stop-color="#9ccdf3"/></linearGradient></defs><path d="M0.4 0.6 Q0.4 0.3 0.8 0.3 H4.8 L6.3 2.4 H13.6 V6 H2.6 L0.9 14.4 H0.4 Z" fill="url(#fb)"/><path d="M2.6 5.6 H15.5 L13.5 14.4 H0.8 Z" fill="url(#fg)"/></svg>
<div class="t" style="left:89px;top:675.0px;font-size:15px;line-height:22px;color:#606266">通用设备</div>
<div class="a" style="left:50px;top:713.0px;width:0;height:0;border-top:5.5px solid transparent;border-bottom:5.5px solid transparent;border-left:7px solid #000"></div>
<svg class="a" style="left:67.5px;top:711.0px" width="16" height="15" viewBox="0 0 16 15"><defs><linearGradient id="fg" x1="0" y1="0" x2="0" y2="1"><stop offset="0" stop-color="#2c90f0"/><stop offset="1" stop-color="#c2e0f8"/></linearGradient><linearGradient id="fb" x1="0" y1="0" x2="0" y2="1"><stop offset="0" stop-color="#08a2ff"/><stop offset="0.6" stop-color="#1a8fe8"/><stop offset="1" stop-color="#9ccdf3"/></linearGradient></defs><path d="M0.4 0.6 Q0.4 0.3 0.8 0.3 H4.8 L6.3 2.4 H13.6 V6 H2.6 L0.9 14.4 H0.4 Z" fill="url(#fb)"/><path d="M2.6 5.6 H15.5 L13.5 14.4 H0.8 Z" fill="url(#fg)"/></svg>
<div class="t" style="left:89px;top:707.5px;font-size:15px;line-height:22px;color:#606266">石油化工(钻采)专用设备</div>
</div>
<div class="a" style="left:279px;top:310px;width:13px;height:122px;background:#fff"></div>
<div class="a" style="left:279px;top:340px;width:13px;height:60px;background:#5a9fe8"></div>
<div class="a" style="left:282px;top:364px;width:0;height:0;border-top:6px solid transparent;border-bottom:6px solid transparent;border-right:7px solid #fff"></div>
<div class="a" style="left:282.5px;top:318px;width:2.2px;height:2.2px;border-radius:50%;background:#3b8be0"></div>
<div class="a" style="left:288.0px;top:318px;width:2.2px;height:2.2px;border-radius:50%;background:#3b8be0"></div>
<div class="a" style="left:282.5px;top:323px;width:2.2px;height:2.2px;border-radius:50%;background:#3b8be0"></div>
<div class="a" style="left:288.0px;top:323px;width:2.2px;height:2.2px;border-radius:50%;background:#3b8be0"></div>
<div class="a" style="left:282.5px;top:328px;width:2.2px;height:2.2px;border-radius:50%;background:#3b8be0"></div>
<div class="a" style="left:288.0px;top:328px;width:2.2px;height:2.2px;border-radius:50%;background:#3b8be0"></div>
<div class="a" style="left:282.5px;top:333px;width:2.2px;height:2.2px;border-radius:50%;background:#3b8be0"></div>
<div class="a" style="left:288.0px;top:333px;width:2.2px;height:2.2px;border-radius:50%;background:#3b8be0"></div>
<div class="a" style="left:282.5px;top:407px;width:2.2px;height:2.2px;border-radius:50%;background:#3b8be0"></div>
<div class="a" style="left:288.0px;top:407px;width:2.2px;height:2.2px;border-radius:50%;background:#3b8be0"></div>
<div class="a" style="left:282.5px;top:412px;width:2.2px;height:2.2px;border-radius:50%;background:#3b8be0"></div>
<div class="a" style="left:288.0px;top:412px;width:2.2px;height:2.2px;border-radius:50%;background:#3b8be0"></div>
<div class="a" style="left:282.5px;top:417px;width:2.2px;height:2.2px;border-radius:50%;background:#3b8be0"></div>
<div class="a" style="left:288.0px;top:417px;width:2.2px;height:2.2px;border-radius:50%;background:#3b8be0"></div>
<div class="a" style="left:282.5px;top:422px;width:2.2px;height:2.2px;border-radius:50%;background:#3b8be0"></div>
<div class="a" style="left:288.0px;top:422px;width:2.2px;height:2.2px;border-radius:50%;background:#3b8be0"></div>
<div class="a" style="left:291px;top:12.5px;width:1460px;height:716px;background:#fff;border:1px solid #dce3ed"></div>
<div class="a" style="left:298px;top:20px;width:149.5px;height:39.5px;border:1px solid #dcdfe6;border-radius:4px;background:#fff"></div>
<div class="t" style="left:318px;top:28px;font-size:17.5px;line-height:22px;color:#a8abb2">设备状态</div>
<svg class="a" style="left:420px;top:36px" width="14" height="8" viewBox="0 0 14 8"><path d="M1 1 L7 7 L13 1" fill="none" stroke="#b4b7bd" stroke-width="1.3"/></svg>
<div class="a" style="left:461px;top:20px;width:149.5px;height:39.5px;border:1px solid #dcdfe6;border-radius:4px;background:#fff"></div>
<div class="t" style="left:481px;top:28px;font-size:17.5px;line-height:22px;color:#a8abb2">设备等级</div>
<svg class="a" style="left:583px;top:36px" width="14" height="8" viewBox="0 0 14 8"><path d="M1 1 L7 7 L13 1" fill="none" stroke="#b4b7bd" stroke-width="1.3"/></svg>
<div class="a" style="left:623px;top:20px;width:149.5px;height:39.5px;border:1px solid #dcdfe6;border-radius:4px;background:#fff"></div>
<div class="t" style="left:643px;top:28px;font-size:17.5px;line-height:22px;color:#a8abb2">动静设备</div>
<svg class="a" style="left:745px;top:36px" width="14" height="8" viewBox="0 0 14 8"><path d="M1 1 L7 7 L13 1" fill="none" stroke="#b4b7bd" stroke-width="1.3"/></svg>
<div class="a" style="left:786px;top:20px;width:149.5px;height:39.5px;border:1px solid #dcdfe6;border-radius:4px;background:#fff"></div>
<div class="t" style="left:799px;top:31px;font-size:17.5px;line-height:22px;color:#a8abb2">使用部门</div>
<div class="a" style="left:909px;top:37px;width:0;height:0;border-left:6px solid transparent;border-right:6px solid transparent;border-top:6.5px solid #c0c4cc"></div>
<div class="a" style="left:298px;top:70px;width:98px;height:37.5px;border:1px solid #a9d2fb;border-radius:5px;background:#ecf5ff"></div>
<div class="a" style="left:298px;top:70px;width:98px;height:37.5px;display:flex;align-items:center;justify-content:center;gap:7px;font-size:17.5px;color:#409eff"><span style="display:flex"><svg width="15" height="15" viewBox="0 0 15 15"><path d="M7.5 0.5V14.5M0.5 7.5H14.5" stroke="#409eff" stroke-width="1.5"/></svg></span><span style="line-height:22px">新增</span></div>
<div class="a" style="left:409px;top:70px;width:133px;height:37.5px;border:1px solid #a9d2fb;border-radius:5px;background:#ecf5ff"></div>
<div class="a" style="left:409px;top:70px;width:133px;height:37.5px;display:flex;align-items:center;justify-content:center;gap:7px;font-size:17.5px;color:#409eff"><span style="display:flex"><svg width="15" height="15" viewBox="0 0 15 15"><path d="M7.5 0.5V14.5M0.5 7.5H14.5" stroke="#409eff" stroke-width="1.5"/></svg></span><span style="line-height:22px">参照新增</span></div>
<div class="a" style="left:555px;top:70px;width:133px;height:37.5px;border:1px solid #a9d2fb;border-radius:5px;background:#ecf5ff"></div>
<div class="a" style="left:555px;top:70px;width:133px;height:37.5px;display:flex;align-items:center;justify-content:center;gap:7px;font-size:17.5px;color:#409eff"><span style="display:flex"><svg width="16" height="16" viewBox="0 0 16 16"><path d="M2 14 L3 10 L10 2 L13 5 L6 13 Z" fill="none" stroke="#409eff" stroke-width="1.4"/><path d="M8 15.2 H15" stroke="#409eff" stroke-width="1.3"/></svg></span><span style="line-height:22px">批量修改</span></div>
<div class="a" style="left:701px;top:70px;width:98px;height:37.5px;border:1px solid #a9d2fb;border-radius:5px;background:#ecf5ff"></div>
<div class="a" style="left:701px;top:70px;width:98px;height:37.5px;display:flex;align-items:center;justify-content:center;gap:7px;font-size:17.5px;color:#409eff"><span style="display:flex"><svg width="15" height="15" viewBox="0 0 15 15"><path d="M7.5 3V14M2.5 8 L7.5 3 L12.5 8M1 14.3H14" fill="none" stroke="#409eff" stroke-width="1.4"/></svg></span><span style="line-height:22px">导入</span></div>
<div class="a" style="left:811px;top:70px;width:133px;height:37.5px;border:1px solid #a9d2fb;border-radius:5px;background:#ecf5ff"></div>
<div class="a" style="left:811px;top:70px;width:133px;height:37.5px;display:flex;align-items:center;justify-content:center;gap:7px;font-size:17.5px;color:#409eff"><span style="display:flex"><svg width="17" height="17" viewBox="0 0 17 17"><path d="M8.5 1.5 L10.6 6 L15.5 6.5 L11.8 9.8 L12.9 14.8 L8.5 12.2 L4.1 14.8 L5.2 9.8 L1.5 6.5 L6.4 6 Z" fill="none" stroke="#409eff" stroke-width="1.4" stroke-linejoin="round"/></svg></span><span style="line-height:22px">综合履历</span></div>
<div class="a" style="left:957px;top:70px;width:133px;height:37.5px;border:1px solid #a9d2fb;border-radius:5px;background:#ecf5ff"></div>
<div class="a" style="left:957px;top:70px;width:133px;height:37.5px;display:flex;align-items:center;justify-content:center;gap:7px;font-size:17.5px;color:#409eff"><span style="display:flex"><svg width="17" height="17" viewBox="0 0 17 17"><path d="M8.5 1.5 L10.6 6 L15.5 6.5 L11.8 9.8 L12.9 14.8 L8.5 12.2 L4.1 14.8 L5.2 9.8 L1.5 6.5 L6.4 6 Z" fill="none" stroke="#409eff" stroke-width="1.4" stroke-linejoin="round"/></svg></span><span style="line-height:22px">手工履历</span></div>
<div class="a" style="left:1103px;top:70px;width:133px;height:37.5px;border:1px solid #a9d2fb;border-radius:5px;background:#ecf5ff"></div>
<div class="a" style="left:1103px;top:70px;width:133px;height:37.5px;display:flex;align-items:center;justify-content:flex-start;padding-left:21px;gap:7px;font-size:17.5px;color:#409eff"><span style="display:flex"><svg width="15" height="15" viewBox="0 0 15 15"><g fill="#409eff"><rect x="1" y="1" width="3.4" height="3.4"/><rect x="5.8" y="1" width="3.4" height="3.4"/><rect x="10.6" y="1" width="3.4" height="3.4"/><rect x="1" y="5.8" width="3.4" height="3.4"/><rect x="5.8" y="5.8" width="3.4" height="3.4"/><rect x="10.6" y="5.8" width="3.4" height="3.4"/><rect x="1" y="10.6" width="3.4" height="3.4"/><rect x="5.8" y="10.6" width="3.4" height="3.4"/><rect x="10.6" y="10.6" width="3.4" height="3.4"/></g></svg></span><span style="line-height:22px">二维码</span></div>
<div class="a" style="left:298px;top:120px;width:137px;height:36.5px;border:1px solid #a9d2fb;border-radius:5px;background:#ecf5ff"></div>
<div class="a" style="left:366px;top:120px;width:1px;height:36.5px;background:#a9d2fb"></div>
<div class="t" style="left:318px;top:127px;font-size:17.5px;line-height:22px;color:#409eff">重置</div>
<div class="t" style="left:385px;top:127px;font-size:17.5px;line-height:22px;color:#409eff">帮助</div>
<div class="a" style="left:298px;top:167px;width:1453px;height:462.5px;background:#fff;overflow:hidden">
<div class="a" style="left:0;top:0;width:1px;height:460px;background:#ebeef5"></div>
<div class="a" style="left:0;top:0;width:1453px;height:70px;background:#f5f7f9;border-top:1px solid #ebeef5;border-bottom:1px solid #ebeef5"></div>
<div class="a" style="left:0;top:130px;width:1453px;height:1px;background:#ebeef5"></div>
<div class="a" style="left:0;top:193px;width:1453px;height:1px;background:#ebeef5"></div>
<div class="a" style="left:0;top:256px;width:1453px;height:1px;background:#ebeef5"></div>
<div class="a" style="left:0;top:319px;width:1453px;height:1px;background:#ebeef5"></div>
<div class="a" style="left:0;top:382px;width:1453px;height:1px;background:#ebeef5"></div>
<div class="a" style="left:0;top:445px;width:1453px;height:1px;background:#ebeef5"></div>
<div class="a" style="left:19px;top:0;width:1px;height:441.7px;background:#ebeef5"></div>
<div class="a" style="left:119px;top:0;width:1px;height:441.7px;background:#ebeef5"></div>
<div class="a" style="left:269px;top:0;width:1px;height:441.7px;background:#ebeef5"></div>
<div class="a" style="left:419px;top:0;width:1px;height:441.7px;background:#ebeef5"></div>
<div class="a" style="left:569px;top:0;width:1px;height:441.7px;background:#ebeef5"></div>
<div class="a" style="left:719px;top:0;width:1px;height:441.7px;background:#ebeef5"></div>
<div class="a" style="left:869px;top:0;width:1px;height:441.7px;background:#ebeef5"></div>
<div class="a" style="left:1019px;top:0;width:1px;height:441.7px;background:#ebeef5"></div>
<div class="t" style="left:19px;top:27px;width:100px;text-align:center;font-size:17.5px;line-height:22px;color:#606266">操作</div>
<div class="t" style="left:119px;top:27px;width:150px;text-align:center;font-size:17.5px;line-height:22px;color:#606266">设备编码</div>
<div class="t" style="left:269px;top:27px;width:150px;text-align:center;font-size:17.5px;line-height:22px;color:#606266">所属大类</div>
<div class="t" style="left:419px;top:27px;width:150px;text-align:center;font-size:17.5px;line-height:22px;color:#606266">所属中类</div>
<div class="t" style="left:593px;top:24px;font-size:17.5px;line-height:22px;color:#606266">功能分类</div>
<div class="a" style="left:673px;top:25.8px;width:0;height:0;border-left:6px solid transparent;border-right:6px solid transparent;border-bottom:6.5px solid #c0c4cc"></div>
<div class="a" style="left:673px;top:34.8px;width:0;height:0;border-left:6px solid transparent;border-right:6px solid transparent;border-top:6.5px solid #c0c4cc"></div>
<div class="t" style="left:719px;top:27px;width:150px;text-align:center;font-size:17.5px;line-height:22px;color:#606266">投用日期</div>
<div class="t" style="left:869px;top:27px;width:150px;text-align:center;font-size:17.5px;line-height:22px;color:#606266">设备名称</div>
<div class="t" style="left:1.5px;top:36px;width:3px;height:1.3px;background:#606266"></div>
<svg class="a" style="left:31.5px;top:85.5px" width="16" height="16" viewBox="0 0 16 16"><circle cx="7.2" cy="7.2" r="6.3" fill="none" stroke="#409eff" stroke-width="1.3"/><path d="M11.6 11.6 L15 15" stroke="#409eff" stroke-width="1.4"/></svg>
<div class="t" style="left:82px;top:98.5px;font-size:17px;line-height:10px;color:#606266;letter-spacing:-0.8px">...</div>
<div class="t" style="left:131px;top:88.7px;font-size:18.5px;line-height:22px;color:#606266;transform:scaleY(1.09);transform-origin:0 55%;margin-left:1px;">M014410399...</div>
<div class="t" style="left:281px;top:88.0px;font-size:17.5px;line-height:22px;color:#606266;letter-spacing:-0.7px;">采掘、钻探及...</div>
<div class="t" style="left:419px;top:88.0px;width:150px;text-align:center;font-size:17.5px;line-height:22px;color:#606266">液压支架</div>
<div class="t" style="left:569px;top:88.0px;width:150px;text-align:center;font-size:17.5px;line-height:22px;color:#606266">各种液压支架</div>
<div class="t" style="left:731px;top:88.7px;font-size:18.5px;line-height:22px;color:#606266;transform:scaleY(1.09);transform-origin:0 55%;margin-left:1px;">2019-12-01 ...</div>
<div class="t" style="left:869px;top:88.0px;width:150px;text-align:center;font-size:17.5px;line-height:22px;color:#606266">液压支架基本架</div>
<svg class="a" style="left:31.5px;top:147.5px" width="16" height="16" viewBox="0 0 16 16"><circle cx="7.2" cy="7.2" r="6.3" fill="none" stroke="#409eff" stroke-width="1.3"/><path d="M11.6 11.6 L15 15" stroke="#409eff" stroke-width="1.4"/></svg>
<div class="t" style="left:82px;top:160.5px;font-size:17px;line-height:10px;color:#606266;letter-spacing:-0.8px">...</div>
<div class="t" style="left:131px;top:150.7px;font-size:18.5px;line-height:22px;color:#606266;transform:scaleY(1.09);transform-origin:0 55%;margin-left:1px;">M014410399...</div>
<div class="t" style="left:281px;top:150.0px;font-size:17.5px;line-height:22px;color:#606266;letter-spacing:-0.7px;">采掘、钻探及...</div>
<div class="t" style="left:419px;top:150.0px;width:150px;text-align:center;font-size:17.5px;line-height:22px;color:#606266">液压支架</div>
<div class="t" style="left:569px;top:150.0px;width:150px;text-align:center;font-size:17.5px;line-height:22px;color:#606266">各种液压支架</div>
<div class="t" style="left:731px;top:150.7px;font-size:18.5px;line-height:22px;color:#606266;transform:scaleY(1.09);transform-origin:0 55%;margin-left:1px;">2019-12-01 ...</div>
<div class="t" style="left:869px;top:150.0px;width:150px;text-align:center;font-size:17.5px;line-height:22px;color:#606266">液压支架基本架</div>
<svg class="a" style="left:31.5px;top:210.5px" width="16" height="16" viewBox="0 0 16 16"><circle cx="7.2" cy="7.2" r="6.3" fill="none" stroke="#409eff" stroke-width="1.3"/><path d="M11.6 11.6 L15 15" stroke="#409eff" stroke-width="1.4"/></svg>
<div class="t" style="left:82px;top:223.5px;font-size:17px;line-height:10px;color:#606266;letter-spacing:-0.8px">...</div>
<div class="t" style="left:131px;top:213.7px;font-size:18.5px;line-height:22px;color:#606266;transform:scaleY(1.09);transform-origin:0 55%;margin-left:1px;">M014410399...</div>
<div class="t" style="left:281px;top:213.0px;font-size:17.5px;line-height:22px;color:#606266;letter-spacing:-0.7px;">采掘、钻探及...</div>
<div class="t" style="left:419px;top:213.0px;width:150px;text-align:center;font-size:17.5px;line-height:22px;color:#606266">液压支架</div>
<div class="t" style="left:569px;top:213.0px;width:150px;text-align:center;font-size:17.5px;line-height:22px;color:#606266">各种液压支架</div>
<div class="t" style="left:731px;top:213.7px;font-size:18.5px;line-height:22px;color:#606266;transform:scaleY(1.09);transform-origin:0 55%;margin-left:1px;">2019-12-01 ...</div>
<div class="t" style="left:869px;top:213.0px;width:150px;text-align:center;font-size:17.5px;line-height:22px;color:#606266">液压支架基本架</div>
<svg class="a" style="left:31.5px;top:273.5px" width="16" height="16" viewBox="0 0 16 16"><circle cx="7.2" cy="7.2" r="6.3" fill="none" stroke="#409eff" stroke-width="1.3"/><path d="M11.6 11.6 L15 15" stroke="#409eff" stroke-width="1.4"/></svg>
<div class="t" style="left:82px;top:286.5px;font-size:17px;line-height:10px;color:#606266;letter-spacing:-0.8px">...</div>
<div class="t" style="left:131px;top:276.7px;font-size:18.5px;line-height:22px;color:#606266;transform:scaleY(1.09);transform-origin:0 55%;margin-left:1px;">M014410399...</div>
<div class="t" style="left:281px;top:276.0px;font-size:17.5px;line-height:22px;color:#606266;letter-spacing:-0.7px;">采掘、钻探及...</div>
<div class="t" style="left:419px;top:276.0px;width:150px;text-align:center;font-size:17.5px;line-height:22px;color:#606266">液压支架</div>
<div class="t" style="left:569px;top:276.0px;width:150px;text-align:center;font-size:17.5px;line-height:22px;color:#606266">各种液压支架</div>
<div class="t" style="left:731px;top:276.7px;font-size:18.5px;line-height:22px;color:#606266;transform:scaleY(1.09);transform-origin:0 55%;margin-left:1px;">2019-12-01 ...</div>
<div class="t" style="left:869px;top:276.0px;width:150px;text-align:center;font-size:17.5px;line-height:22px;color:#606266">液压支架基本架</div>
<svg class="a" style="left:31.5px;top:336.5px" width="16" height="16" viewBox="0 0 16 16"><circle cx="7.2" cy="7.2" r="6.3" fill="none" stroke="#409eff" stroke-width="1.3"/><path d="M11.6 11.6 L15 15" stroke="#409eff" stroke-width="1.4"/></svg>
<div class="t" style="left:82px;top:349.5px;font-size:17px;line-height:10px;color:#606266;letter-spacing:-0.8px">...</div>
<div class="t" style="left:131px;top:339.7px;font-size:18.5px;line-height:22px;color:#606266;transform:scaleY(1.09);transform-origin:0 55%;margin-left:1px;">M014410399...</div>
<div class="t" style="left:281px;top:339.0px;font-size:17.5px;line-height:22px;color:#606266;letter-spacing:-0.7px;">采掘、钻探及...</div>
<div class="t" style="left:419px;top:339.0px;width:150px;text-align:center;font-size:17.5px;line-height:22px;color:#606266">液压支架</div>
<div class="t" style="left:569px;top:339.0px;width:150px;text-align:center;font-size:17.5px;line-height:22px;color:#606266">各种液压支架</div>
<div class="t" style="left:731px;top:339.7px;font-size:18.5px;line-height:22px;color:#606266;transform:scaleY(1.09);transform-origin:0 55%;margin-left:1px;">2019-12-01 ...</div>
<div class="t" style="left:869px;top:339.0px;width:150px;text-align:center;font-size:17.5px;line-height:22px;color:#606266">液压支架基本架</div>
<svg class="a" style="left:31.5px;top:399.5px" width="16" height="16" viewBox="0 0 16 16"><circle cx="7.2" cy="7.2" r="6.3" fill="none" stroke="#409eff" stroke-width="1.3"/><path d="M11.6 11.6 L15 15" stroke="#409eff" stroke-width="1.4"/></svg>
<div class="t" style="left:82px;top:412.5px;font-size:17px;line-height:10px;color:#606266;letter-spacing:-0.8px">...</div>
<div class="t" style="left:131px;top:402.7px;font-size:18.5px;line-height:22px;color:#606266;transform:scaleY(1.09);transform-origin:0 55%;margin-left:1px;">M014410399...</div>
<div class="t" style="left:281px;top:402.0px;font-size:17.5px;line-height:22px;color:#606266;letter-spacing:-0.7px;">采掘、钻探及...</div>
<div class="t" style="left:419px;top:402.0px;width:150px;text-align:center;font-size:17.5px;line-height:22px;color:#606266">液压支架</div>
<div class="t" style="left:569px;top:402.0px;width:150px;text-align:center;font-size:17.5px;line-height:22px;color:#606266">各种液压支架</div>
<div class="t" style="left:731px;top:402.7px;font-size:18.5px;line-height:22px;color:#606266;transform:scaleY(1.09);transform-origin:0 55%;margin-left:1px;">2019-12-01 ...</div>
<div class="t" style="left:869px;top:402.0px;width:150px;text-align:center;font-size:17.5px;line-height:22px;color:#606266">液压支架基本架</div>
<div class="a" style="left:0;top:441.7px;width:1453px;height:18px;background:#fff"></div>
<div class="a" style="left:51px;top:441.7px;width:599px;height:18px;background:#cccccc"></div>
<div class="a" style="left:0;top:459.7px;width:1453px;height:3px;background:#e4e7ed"></div>
</div>
<div class="t" style="left:828px;top:662px;font-size:17.5px;line-height:22px;color:#606266">共 1037 条</div>
<div class="a" style="left:931.5px;top:657.3px;width:124px;height:34.2px;border:1px solid #dcdfe6;border-radius:3px;background:#fff"></div>
<div class="t" style="left:949.5px;top:663.3px;font-size:17.5px;line-height:22px;color:#606266">100条/页</div>
<svg class="a" style="left:1036.5px;top:670.8px" width="11" height="7" viewBox="0 0 11 7"><path d="M1 1 L5.5 5.5 L10 1" fill="none" stroke="#c0c4cc" stroke-width="1.2"/></svg>
<div class="a" style="left:1081.2px;top:657.3px;width:37.7px;height:34.2px;background:#f4f4f5;border-radius:2px"></div>
<svg class="a" style="left:1096.2px;top:667.3px" width="8" height="14" viewBox="0 0 8 14"><path d="M7 1 L1.5 7 L7 13" fill="none" stroke="#c0c4cc" stroke-width="1.5"/></svg>
<div class="a" style="left:1130.8px;top:657.3px;width:38px;height:34.2px;background:#409eff;border-radius:2px"></div>
<div class="t" style="left:1130.8px;top:663.3px;width:38px;text-align:center;font-size:17.5px;line-height:22px;font-weight:bold;color:#fff">1</div>
<div class="a" style="left:1180.8px;top:657.3px;width:38px;height:34.2px;background:#f4f4f5;border-radius:2px"></div>
<div class="a" style="left:0;top:0;width:1751px;height:741.5px;background:rgba(0,0,0,0.2)"></div>
</div>
<div class="a" style="left:165px;top:887.5px;width:1755px;height:2px;background:#fafafa"></div>
<div class="a" style="left:1358px;top:146px;width:562px;height:743px;background:#fff;overflow:hidden">
<div class="a" style="left:25px;top:25.7px;width:5px;height:35px;background:#1890ff;border-radius:0 3px 3px 0"></div>
<div class="t" style="left:41.5px;top:32px;font-size:22.5px;line-height:28px;font-weight:bold;color:#111">设备详情</div>
<svg class="a" style="left:513px;top:34.5px" width="19" height="19" viewBox="0 0 19 19"><path d="M1 1 L18 18 M18 1 L1 18" stroke="#111" stroke-width="2"/></svg>
<div class="a" style="left:0;top:87px;width:562px;height:1px;background:#d9d9d9"></div>
<div class="a" style="left:556px;top:88px;width:6px;height:533px;background:#c1c1c1"></div>
<div class="t" style="left:25px;top:114.3px;font-size:17.5px;line-height:22px;font-weight:bold;color:#111">设备编码</div>
<div class="t" style="left:150px;top:111.3px;font-size:17.5px;line-height:22px;color:#222">M0144103990895</div>
<div class="t" style="left:25px;top:150.5px;font-size:17.5px;line-height:22px;font-weight:bold;color:#111">设备名称</div>
<div class="t" style="left:150px;top:150.5px;font-size:17.5px;line-height:22px;color:#222">液压支架基本架</div>
<div class="t" style="left:25px;top:188px;font-size:17.5px;line-height:22px;font-weight:bold;color:#111">资产状态</div>
<div class="t" style="left:150px;top:188px;font-size:17.5px;line-height:22px;color:#222">完好在用</div>
<div class="t" style="left:25px;top:224.2px;font-size:17.5px;line-height:22px;font-weight:bold;color:#111">设备等级</div>
<div class="t" style="left:25px;top:260.4px;font-size:17.5px;line-height:22px;font-weight:bold;color:#111">使用部门</div>
<div class="t" style="left:150px;top:260.4px;font-size:17.5px;line-height:22px;color:#222">综采二队</div>
<div class="t" style="left:25px;top:296.6px;font-size:17.5px;line-height:22px;font-weight:bold;color:#111">规格型号</div>
<div class="t" style="left:150px;top:293.6px;font-size:17.5px;line-height:22px;color:#222">ZYG12000/13/26D</div>
<svg class="a" style="left:406px;top:112.3px" width="125.5" height="125.5" viewBox="0 0 33 33" shape-rendering="crispEdges"><path d="M0 0h7v1h-7zM8 0h5v1h-5zM14 0h2v1h-2zM19 0h1v1h-1zM21 0h1v1h-1zM23 0h2v1h-2zM26 0h7v1h-7zM0 1h1v1h-1zM6 1h1v1h-1zM8 1h1v1h-1zM11 1h1v1h-1zM16 1h1v1h-1zM18 1h2v1h-2zM21 1h1v1h-1zM23 1h1v1h-1zM26 1h1v1h-1zM32 1h1v1h-1zM0 2h1v1h-1zM2 2h3v1h-3zM6 2h1v1h-1zM9 2h2v1h-2zM12 2h1v1h-1zM14 2h3v1h-3zM18 2h3v1h-3zM22 2h1v1h-1zM26 2h1v1h-1zM28 2h3v1h-3zM32 2h1v1h-1zM0 3h1v1h-1zM2 3h3v1h-3zM6 3h1v1h-1zM8 3h2v1h-2zM16 3h1v1h-1zM21 3h3v1h-3zM26 3h1v1h-1zM28 3h3v1h-3zM32 3h1v1h-1zM0 4h1v1h-1zM2 4h3v1h-3zM6 4h1v1h-1zM8 4h2v1h-2zM14 4h4v1h-4zM19 4h2v1h-2zM23 4h1v1h-1zM26 4h1v1h-1zM28 4h3v1h-3zM32 4h1v1h-1zM0 5h1v1h-1zM6 5h1v1h-1zM11 5h1v1h-1zM13 5h5v1h-5zM24 5h1v1h-1zM26 5h1v1h-1zM32 5h1v1h-1zM0 6h7v1h-7zM8 6h1v1h-1zM10 6h1v1h-1zM12 6h1v1h-1zM14 6h1v1h-1zM16 6h1v1h-1zM18 6h1v1h-1zM20 6h1v1h-1zM22 6h1v1h-1zM24 6h1v1h-1zM26 6h7v1h-7zM9 7h3v1h-3zM13 7h1v1h-1zM17 7h1v1h-1zM22 7h1v1h-1zM24 7h1v1h-1zM2 8h1v1h-1zM4 8h3v1h-3zM23 8h1v1h-1zM27 8h2v1h-2zM30 8h3v1h-3zM3 9h1v1h-1zM9 9h1v1h-1zM11 9h1v1h-1zM15 9h2v1h-2zM18 9h3v1h-3zM22 9h1v1h-1zM25 9h2v1h-2zM29 9h1v1h-1zM0 10h3v1h-3zM4 10h3v1h-3zM9 10h2v1h-2zM14 10h2v1h-2zM17 10h2v1h-2zM22 10h1v1h-1zM24 10h1v1h-1zM27 10h1v1h-1zM30 10h2v1h-2zM0 11h6v1h-6zM8 11h1v1h-1zM10 11h5v1h-5zM17 11h1v1h-1zM20 11h1v1h-1zM22 11h1v1h-1zM25 11h1v1h-1zM29 11h1v1h-1zM0 12h5v1h-5zM6 12h3v1h-3zM12 12h3v1h-3zM16 12h1v1h-1zM18 12h1v1h-1zM22 12h1v1h-1zM24 12h4v1h-4zM30 12h1v1h-1zM32 12h1v1h-1zM0 13h6v1h-6zM13 13h2v1h-2zM16 13h1v1h-1zM19 13h1v1h-1zM25 13h1v1h-1zM2 14h5v1h-5zM13 14h1v1h-1zM19 14h1v1h-1zM21 14h3v1h-3zM25 14h1v1h-1zM29 14h1v1h-1zM2 15h3v1h-3zM8 15h3v1h-3zM14 15h1v1h-1zM18 15h1v1h-1zM20 15h1v1h-1zM23 15h1v1h-1zM28 15h2v1h-2zM31 15h1v1h-1zM0 16h1v1h-1zM3 16h1v1h-1zM6 16h1v1h-1zM8 16h1v1h-1zM11 16h2v1h-2zM15 16h4v1h-4zM20 16h1v1h-1zM23 16h1v1h-1zM27 16h3v1h-3zM32 16h1v1h-1zM0 17h4v1h-4zM5 17h1v1h-1zM7 17h2v1h-2zM10 17h2v1h-2zM20 17h1v1h-1zM25 17h2v1h-2zM28 17h1v1h-1zM30 17h2v1h-2zM1 18h1v1h-1zM3 18h1v1h-1zM5 18h4v1h-4zM11 18h1v1h-1zM15 18h7v1h-7zM25 18h2v1h-2zM28 18h4v1h-4zM0 19h1v1h-1zM4 19h2v1h-2zM7 19h1v1h-1zM12 19h2v1h-2zM18 19h2v1h-2zM24 19h3v1h-3zM2 20h1v1h-1zM4 20h1v1h-1zM6 20h4v1h-4zM12 20h2v1h-2zM16 20h2v1h-2zM19 20h2v1h-2zM26 20h2v1h-2zM30 20h2v1h-2zM1 21h2v1h-2zM5 21h1v1h-1zM7 21h2v1h-2zM10 21h1v1h-1zM14 21h1v1h-1zM16 21h1v1h-1zM18 21h2v1h-2zM21 21h1v1h-1zM24 21h3v1h-3zM29 21h3v1h-3zM0 22h4v1h-4zM6 22h1v1h-1zM9 22h2v1h-2zM13 22h1v1h-1zM15 22h12v1h-12zM29 22h2v1h-2zM32 22h1v1h-1zM1 23h2v1h-2zM4 23h2v1h-2zM8 23h3v1h-3zM12 23h1v1h-1zM15 23h2v1h-2zM19 23h1v1h-1zM21 23h2v1h-2zM26 23h1v1h-1zM28 23h2v1h-2zM0 24h3v1h-3zM5 24h2v1h-2zM11 24h3v1h-3zM15 24h2v1h-2zM18 24h3v1h-3zM22 24h1v1h-1zM24 24h1v1h-1zM26 24h3v1h-3zM32 24h1v1h-1zM8 25h1v1h-1zM10 25h1v1h-1zM12 25h4v1h-4zM18 25h2v1h-2zM22 25h1v1h-1zM26 25h1v1h-1zM31 25h2v1h-2zM0 26h7v1h-7zM8 26h1v1h-1zM11 26h1v1h-1zM14 26h5v1h-5zM21 26h7v1h-7zM30 26h3v1h-3zM0 27h1v1h-1zM6 27h1v1h-1zM9 27h1v1h-1zM11 27h2v1h-2zM15 27h2v1h-2zM18 27h2v1h-2zM21 27h1v1h-1zM23 27h1v1h-1zM26 27h2v1h-2zM31 27h1v1h-1zM0 28h1v1h-1zM2 28h3v1h-3zM6 28h1v1h-1zM10 28h2v1h-2zM15 28h1v1h-1zM17 28h1v1h-1zM21 28h1v1h-1zM23 28h2v1h-2zM27 28h3v1h-3zM31 28h2v1h-2zM0 29h1v1h-1zM2 29h3v1h-3zM6 29h1v1h-1zM8 29h1v1h-1zM12 29h2v1h-2zM15 29h1v1h-1zM18 29h2v1h-2zM22 29h1v1h-1zM26 29h1v1h-1zM28 29h4v1h-4zM0 30h1v1h-1zM2 30h3v1h-3zM6 30h1v1h-1zM9 30h1v1h-1zM11 30h1v1h-1zM16 30h1v1h-1zM21 30h1v1h-1zM24 30h2v1h-2zM27 30h1v1h-1zM29 30h1v1h-1zM31 30h1v1h-1zM0 31h1v1h-1zM6 31h1v1h-1zM11 31h1v1h-1zM13 31h1v1h-1zM16 31h1v1h-1zM21 31h1v1h-1zM24 31h1v1h-1zM26 31h1v1h-1zM29 31h1v1h-1zM32 31h1v1h-1zM0 32h7v1h-7zM8 32h4v1h-4zM13 32h1v1h-1zM16 32h2v1h-2zM19 32h6v1h-6zM27 32h1v1h-1zM30 32h1v1h-1zM32 32h1v1h-1z" fill="#000"/></svg>
<div class="a" style="left:25px;top:357px;width:5.5px;height:24px;background:#1890ff"></div>
<div class="t" style="left:36px;top:358.5px;font-size:17.5px;line-height:22px;font-weight:bold;color:#111">报修</div>
<div class="a" style="left:25px;top:393px;width:507px;height:0;border-top:1px dotted #c8c8c8"></div>
<svg class="a" style="left:60px;top:417px" width="82" height="70" viewBox="0 0 82 70"><path d="M6.8 35 L28 16.5 L43.3 31 L71 6" fill="none" stroke="#f9a21f" stroke-width="6" stroke-linecap="round" stroke-linejoin="round"/><path d="M53.5 4 L72.5 4 L72.5 22.5" fill="none" stroke="#f9a21f" stroke-width="6" stroke-linecap="round" stroke-linejoin="round"/><path d="M3 66.3 H79" stroke="#1273c9" stroke-width="5" stroke-linecap="round"/><path d="M15.2 66 V51 M32.1 66 V41 M49 66 V48 M65.8 66 V37" stroke="#1273c9" stroke-width="4.5" stroke-linecap="round"/></svg>
<svg class="a" style="left:238.5px;top:413.5px" width="78" height="78" viewBox="0 0 78 78"><defs><linearGradient id="cg0" x1="0" y1="0" x2="1" y2="1"><stop offset="0" stop-color="#56dcff"/><stop offset="1" stop-color="#1aa8f7"/></linearGradient></defs><circle cx="39" cy="39" r="39" fill="#e6f8fe"/><rect x="17.5" y="17.5" width="12.5" height="34.5" rx="6.2" fill="url(#cg0)"/><rect x="33.5" y="10" width="12.5" height="42" rx="6.2" fill="url(#cg0)"/><rect x="49" y="21" width="12.5" height="31" rx="6.2" fill="url(#cg0)"/><rect x="13" y="56.5" width="53" height="4" rx="2" fill="#2ab5f8"/></svg>
<svg class="a" style="left:414px;top:414px" width="82" height="78" viewBox="0 0 82 78"><path d="M0.7 40 A40.3 40.3 0 0 1 81.3 40 Z" fill="#f98b8f"/><rect x="28.5" y="13" width="25" height="53" fill="#f5646f" stroke="#6b5b5e" stroke-width="2.6"/><rect x="53" y="26" width="24" height="40" fill="#f9d56e" stroke="#6b5b5e" stroke-width="2.6"/><rect x="5" y="39" width="23.5" height="27" fill="#a6ef6b" stroke="#6b5b5e" stroke-width="2.6"/><rect x="2" y="64.5" width="78" height="11" rx="2.5" fill="#bdb4b9" stroke="#6b5b5e" stroke-width="2.6"/><text x="40.5" y="33" font-family="Liberation Sans" font-weight="bold" font-size="15" fill="#fff" text-anchor="middle">1</text><text x="64.5" y="46.2" font-family="Liberation Sans" font-weight="bold" font-size="15" fill="#fff" text-anchor="middle">2</text><text x="18.5" y="57.8" font-family="Liberation Sans" font-weight="bold" font-size="15" fill="#fff" text-anchor="middle">3</text></svg>
<div class="t" style="left:20.5px;top:504px;width:160px;text-align:center;font-size:28px;line-height:32px;font-weight:bold;color:#000">1</div>
<div class="t" style="left:20.5px;top:546px;width:160px;text-align:center;font-size:17.5px;line-height:24px;color:#111;white-space:normal">报修次数</div>
<div class="t" style="left:197.5px;top:504px;width:160px;text-align:center;font-size:28px;line-height:32px;font-weight:bold;color:#000">2</div>
<div class="t" style="left:197.5px;top:546px;width:160px;text-align:center;font-size:17.5px;line-height:24px;color:#111;white-space:normal">同类设备平均报修<br>次数</div>
<div class="t" style="left:374.5px;top:504px;width:160px;text-align:center;font-size:28px;line-height:32px;font-weight:bold;color:#000">3</div>
<div class="t" style="left:374.5px;top:546px;width:160px;text-align:center;font-size:17.5px;line-height:24px;color:#111;white-space:normal">同类设备排名</div>
<div class="a" style="left:25px;top:630.3px;width:5.5px;height:24px;background:#1890ff"></div>
<div class="t" style="left:36px;top:631.8px;font-size:17.5px;line-height:22px;font-weight:bold;color:#111">维保</div>
<div class="a" style="left:25px;top:666.3px;width:507px;height:0;border-top:1px dotted #c8c8c8"></div>
<svg class="a" style="left:60px;top:690.3px" width="82" height="70" viewBox="0 0 82 70"><path d="M6.8 35 L28 16.5 L43.3 31 L71 6" fill="none" stroke="#f9a21f" stroke-width="6" stroke-linecap="round" stroke-linejoin="round"/><path d="M53.5 4 L72.5 4 L72.5 22.5" fill="none" stroke="#f9a21f" stroke-width="6" stroke-linecap="round" stroke-linejoin="round"/><path d="M3 66.3 H79" stroke="#1273c9" stroke-width="5" stroke-linecap="round"/><path d="M15.2 66 V51 M32.1 66 V41 M49 66 V48 M65.8 66 V37" stroke="#1273c9" stroke-width="4.5" stroke-linecap="round"/></svg>
<svg class="a" style="left:238.5px;top:686.8px" width="78" height="78" viewBox="0 0 78 78"><defs><linearGradient id="cg273.3" x1="0" y1="0" x2="1" y2="1"><stop offset="0" stop-color="#56dcff"/><stop offset="1" stop-color="#1aa8f7"/></linearGradient></defs><circle cx="39" cy="39" r="39" fill="#e6f8fe"/><rect x="17.5" y="17.5" width="12.5" height="34.5" rx="6.2" fill="url(#cg273.3)"/><rect x="33.5" y="10" width="12.5" height="42" rx="6.2" fill="url(#cg273.3)"/><rect x="49" y="21" width="12.5" height="31" rx="6.2" fill="url(#cg273.3)"/><rect x="13" y="56.5" width="53" height="4" rx="2" fill="#2ab5f8"/></svg>
<svg class="a" style="left:414px;top:687.3px" width="82" height="78" viewBox="0 0 82 78"><path d="M0.7 40 A40.3 40.3 0 0 1 81.3 40 Z" fill="#f98b8f"/><rect x="28.5" y="13" width="25" height="53" fill="#f5646f" stroke="#6b5b5e" stroke-width="2.6"/><rect x="53" y="26" width="24" height="40" fill="#f9d56e" stroke="#6b5b5e" stroke-width="2.6"/><rect x="5" y="39" width="23.5" height="27" fill="#a6ef6b" stroke="#6b5b5e" stroke-width="2.6"/><rect x="2" y="64.5" width="78" height="11" rx="2.5" fill="#bdb4b9" stroke="#6b5b5e" stroke-width="2.6"/><text x="40.5" y="33" font-family="Liberation Sans" font-weight="bold" font-size="15" fill="#fff" text-anchor="middle">1</text><text x="64.5" y="46.2" font-family="Liberation Sans" font-weight="bold" font-size="15" fill="#fff" text-anchor="middle">2</text><text x="18.5" y="57.8" font-family="Liberation Sans" font-weight="bold" font-size="15" fill="#fff" text-anchor="middle">3</text></svg>
<div class="t" style="left:20.5px;top:777.3px;width:160px;text-align:center;font-size:28px;line-height:32px;font-weight:bold;color:#000">1</div>
<div class="t" style="left:20.5px;top:819.3px;width:160px;text-align:center;font-size:17.5px;line-height:24px;color:#111;white-space:normal">报修次数</div>
<div class="t" style="left:197.5px;top:777.3px;width:160px;text-align:center;font-size:28px;line-height:32px;font-weight:bold;color:#000">2</div>
<div class="t" style="left:197.5px;top:819.3px;width:160px;text-align:center;font-size:17.5px;line-height:24px;color:#111;white-space:normal">同类设备平均报修<br>次数</div>
<div class="t" style="left:374.5px;top:777.3px;width:160px;text-align:center;font-size:28px;line-height:32px;font-weight:bold;color:#000">3</div>
<div class="t" style="left:374.5px;top:819.3px;width:160px;text-align:center;font-size:17.5px;line-height:24px;color:#111;white-space:normal">同类设备排名</div>
</div>
</body></html>
